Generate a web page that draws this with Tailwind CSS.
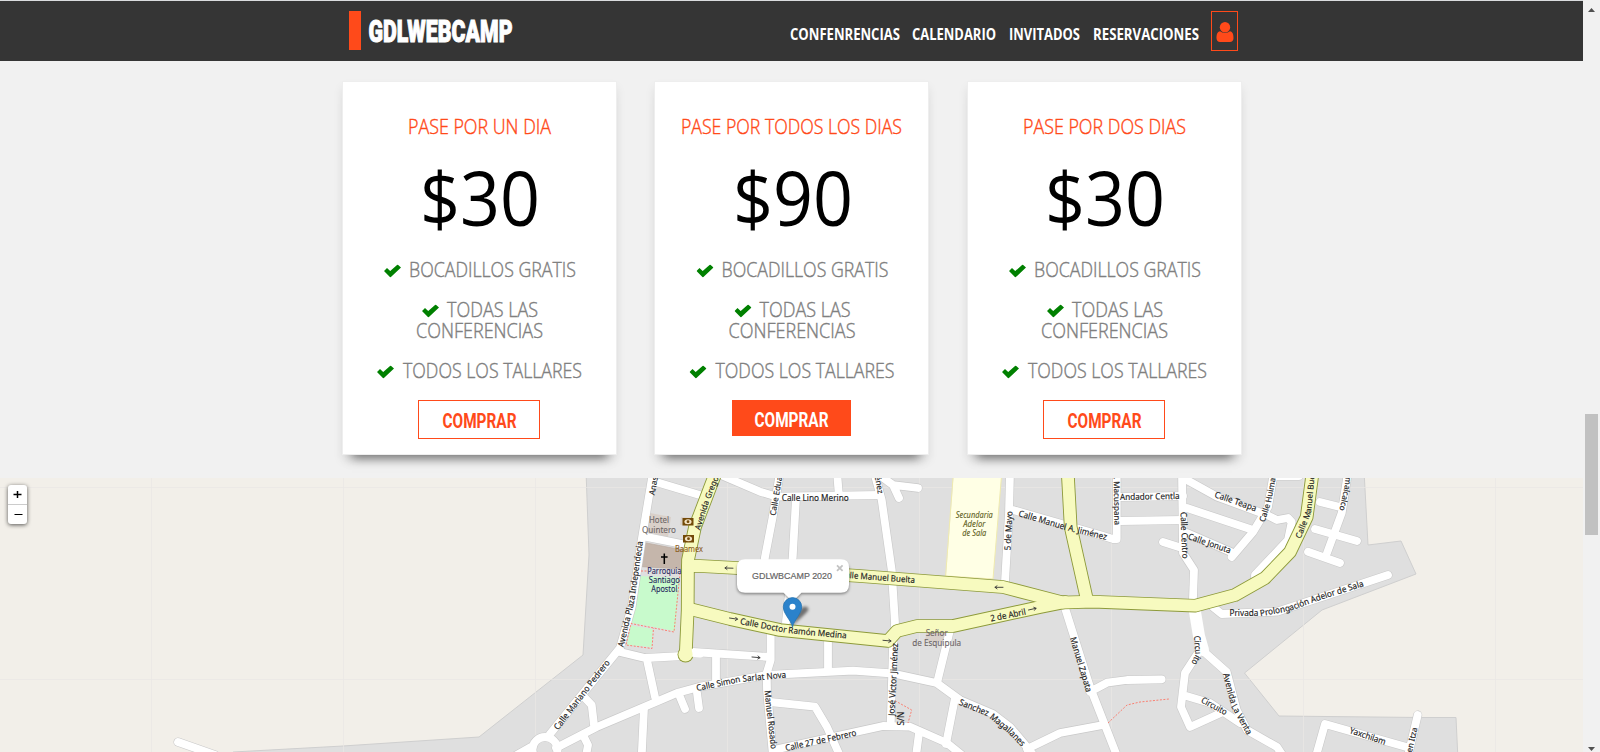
<!DOCTYPE html>
<html lang="es">
<head>
<meta charset="utf-8">
<title>GDLWEBCAMP</title>
<script src="https://cdn.jsdelivr.net/npm/@tailwindcss/browser@4"></script>
</head>
<body class="h-[752px] overflow-hidden bg-[#f1f1f1] font-['Open_Sans','Noto_Sans',sans-serif]">
<svg width="0" height="0" class="absolute">
  <symbol id="check" viewBox="0 0 17 13"><path fill="#008000" stroke="none" d="M0 6.6 3 3.4 6.2 6.6 13.6 0 17 3 6.400 13Z"/></symbol>
</svg>
<div class="flex h-full">
  <div class="flex w-[1583px] flex-col">
    <header class="h-[61px] border-t border-[#dadcde] bg-[#353535]">
      <div class="ml-[349px] flex h-full w-[889px] items-start justify-between pt-2.5">
        <div class="flex">
          <div class="h-[39px] w-3 bg-[#ff4a1a]"></div>
          <svg class="h-[39px] w-[160px] overflow-visible"><text x="7.5" y="31" textLength="144" lengthAdjust="spacingAndGlyphs" stroke-width="1.1" class="fill-white stroke-white font-['Roboto'] text-[31.5px] font-black">GDLWEBCAMP</text></svg>
        </div>
        <nav class="flex h-10 fill-white text-[15.5px] font-bold">
          <svg class="h-10 w-[122px] overflow-visible"><text y="29" textLength="110" lengthAdjust="spacingAndGlyphs">CONFENRENCIAS</text></svg>
          <svg class="h-10 w-[97px] overflow-visible"><text y="29" textLength="84" lengthAdjust="spacingAndGlyphs">CALENDARIO</text></svg>
          <svg class="h-10 w-[84px] overflow-visible"><text y="29" textLength="71" lengthAdjust="spacingAndGlyphs">INVITADOS</text></svg>
          <svg class="h-10 w-[118px] overflow-visible"><text y="29" textLength="106" lengthAdjust="spacingAndGlyphs">RESERVACIONES</text></svg>
          <div class="flex h-10 w-[27px] justify-center border border-[#ff4a1a] pt-2.5">
            <svg class="h-5 w-[18px]" viewBox="0 0 18 20"><circle cx="9" cy="5.2" r="5.2" fill="#ff4a1a"/><path fill="#ff4a1a" d="M4.1 9.2Q6 11 9 11t4.900-1.800C16.800 9.700 17.500 12.500 17.500 16.200 17.500 18.600 16 20 14 20H4C2 20 .5 18.600.5 16.200.5 12.500 1.200 9.700 4.100 9.200Z"/></svg>
          </div>
        </nav>
      </div>
    </header>

    <main class="ml-[343px] flex h-[417px] gap-[39px] pt-[21px]">
      <section class="flex h-[372px] w-[273px] flex-col items-center bg-white shadow-[0_0_0_1px_#eeeeee,0_13px_10px_-9px_rgba(0,0,0,.5),0_6px_10px_rgba(0,0,0,.1)]">
        <svg class="mt-8 h-6 w-full overflow-visible"><text x="65" y="19.5" textLength="143" lengthAdjust="spacingAndGlyphs" stroke-width=".4" class="fill-[#ff4a1a] stroke-[#ff4a1a] text-[19.5px] font-light">PASE POR UN DIA</text></svg>
        <svg class="mt-6 h-[72px] w-full overflow-visible"><text x="77" y="63.5" textLength="120" lengthAdjust="spacingAndGlyphs" class="text-[75px]">$30</text></svg>
        <svg class="mt-4 h-[148px] w-full fill-[#808080] stroke-[#808080] text-[19.5px] font-light" stroke-width=".4">
          <use href="#check" x="41" y="14.5" width="17" height="13"/><text x="66" y="27" textLength="167" lengthAdjust="spacingAndGlyphs">BOCADILLOS GRATIS</text>
          <use href="#check" x="79" y="54.5" width="17" height="13"/><text x="104" y="67" textLength="91" lengthAdjust="spacingAndGlyphs">TODAS LAS</text>
          <text x="73" y="88" textLength="127" lengthAdjust="spacingAndGlyphs">CONFERENCIAS</text>
          <use href="#check" x="34" y="115.5" width="17" height="13"/><text x="60" y="128" textLength="179" lengthAdjust="spacingAndGlyphs">TODOS LOS TALLARES</text>
        </svg>
        <div class="mt-0.5 mr-px flex h-[39px] w-[122px] border border-[#ff4a1a]">
          <svg class="h-full w-full overflow-visible"><text x="23.5" y="26.5" textLength="74" lengthAdjust="spacingAndGlyphs" class="fill-[#ff4a1a] font-['Roboto'] text-[21px] font-bold">COMPRAR</text></svg>
        </div>
      </section>
      <section class="flex h-[372px] w-[273px] flex-col items-center bg-white shadow-[0_0_0_1px_#eeeeee,0_13px_10px_-9px_rgba(0,0,0,.5),0_6px_10px_rgba(0,0,0,.1)]">
        <svg class="mt-8 h-6 w-full overflow-visible"><text x="26" y="19.5" textLength="221" lengthAdjust="spacingAndGlyphs" stroke-width=".4" class="fill-[#ff4a1a] stroke-[#ff4a1a] text-[19.5px] font-light">PASE POR TODOS LOS DIAS</text></svg>
        <svg class="mt-6 h-[72px] w-full overflow-visible"><text x="78" y="63.5" textLength="120" lengthAdjust="spacingAndGlyphs" class="text-[75px]">$90</text></svg>
        <svg class="mt-4 h-[148px] w-full fill-[#808080] stroke-[#808080] text-[19.5px] font-light" stroke-width=".4">
          <use href="#check" x="41.5" y="14.5" width="17" height="13"/><text x="66.5" y="27" textLength="167" lengthAdjust="spacingAndGlyphs">BOCADILLOS GRATIS</text>
          <use href="#check" x="79.5" y="54.5" width="17" height="13"/><text x="104.5" y="67" textLength="91" lengthAdjust="spacingAndGlyphs">TODAS LAS</text>
          <text x="73.5" y="88" textLength="127" lengthAdjust="spacingAndGlyphs">CONFERENCIAS</text>
          <use href="#check" x="34.5" y="115.5" width="17" height="13"/><text x="60.5" y="128" textLength="179" lengthAdjust="spacingAndGlyphs">TODOS LOS TALLARES</text>
        </svg>
        <div class="mt-0.5 flex h-9 w-[119px] bg-[#ff4a1a]">
          <svg class="h-full w-full overflow-visible"><text x="22.5" y="26.5" textLength="74" lengthAdjust="spacingAndGlyphs" class="fill-white font-['Roboto'] text-[21px] font-bold">COMPRAR</text></svg>
        </div>
      </section>
      <section class="ml-px flex h-[372px] w-[273px] flex-col items-center bg-white shadow-[0_0_0_1px_#eeeeee,0_13px_10px_-9px_rgba(0,0,0,.5),0_6px_10px_rgba(0,0,0,.1)]">
        <svg class="mt-8 h-6 w-full overflow-visible"><text x="55" y="19.5" textLength="163" lengthAdjust="spacingAndGlyphs" stroke-width=".4" class="fill-[#ff4a1a] stroke-[#ff4a1a] text-[19.5px] font-light">PASE POR DOS DIAS</text></svg>
        <svg class="mt-6 h-[72px] w-full overflow-visible"><text x="77" y="63.5" textLength="120" lengthAdjust="spacingAndGlyphs" class="text-[75px]">$30</text></svg>
        <svg class="mt-4 h-[148px] w-full fill-[#808080] stroke-[#808080] text-[19.5px] font-light" stroke-width=".4">
          <use href="#check" x="41" y="14.5" width="17" height="13"/><text x="66" y="27" textLength="167" lengthAdjust="spacingAndGlyphs">BOCADILLOS GRATIS</text>
          <use href="#check" x="79" y="54.5" width="17" height="13"/><text x="104" y="67" textLength="91" lengthAdjust="spacingAndGlyphs">TODAS LAS</text>
          <text x="73" y="88" textLength="127" lengthAdjust="spacingAndGlyphs">CONFERENCIAS</text>
          <use href="#check" x="34" y="115.5" width="17" height="13"/><text x="60" y="128" textLength="179" lengthAdjust="spacingAndGlyphs">TODOS LOS TALLARES</text>
        </svg>
        <div class="mt-0.5 mr-px flex h-[39px] w-[122px] border border-[#ff4a1a]">
          <svg class="h-full w-full overflow-visible"><text x="23.5" y="26.5" textLength="74" lengthAdjust="spacingAndGlyphs" class="fill-[#ff4a1a] font-['Roboto'] text-[21px] font-bold">COMPRAR</text></svg>
        </div>
      </section>
    </main>

    <div class="relative h-[274px] w-full overflow-hidden bg-[#f2efe9]">
      <svg class="block h-[274px] w-[1583px]" viewBox="0 478 1583 274" fill="none" stroke-linejoin="round" stroke-linecap="round">
        <defs>
          <filter id="soft" x="-50%" y="-50%" width="200%" height="200%"><feGaussianBlur stdDeviation="1.8"/></filter>
          <g id="roads">
            <path d="M178 742 215 755"/>
            <path d="M653 472 641.7 540 631.7 607 620 648 581.7 695 550 734"/>
            <path d="M531 747 515 756M556 748 596.7 727 656.7 701.7 677 693 700 686.7 767 675 853 670.7 893 673.5 936.7 683 960 700 993 714 1010 727 1027 747 1034 756"/>
            <path d="M655 481.7 703 496M721 475 760 491.7 777 496.7 880 495"/>
            <path d="M780 472 772.7 517 765 557 764 566M796 498 792.7 557 786 622"/>
            <path d="M770.7 630V660L766.7 673 767 690 773 756M837 472 838.7 493"/>
            <path d="M874 472 881.7 500 891.7 570 895 623 893 647 890.7 724"/>
            <path d="M878 474 893 485 918 488M893 485 899 498"/>
            <path d="M1010 472 1009 513 1005 582M1013 510 1100 535 1113 539H1116.7V472"/>
            <path d="M1120 497 1183 496M1120 521 1183 520"/>
            <path d="M1182 472 1183 553 1194 570 1192.7 607 1198 633 1202 650 1226.7 672 1236.7 710 1247 730 1277 747 1283 756"/>
            <path d="M1200 650 1185 673 1181 707 1190 727 1223 712M1183 695 1210 703 1240 723"/>
            <path d="M1163 542 1182 548M1187 533 1231 552M1187 508 1253 530"/>
            <path d="M1187 480 1217 496.7 1267 515 1277 520 1288 518 1291.7 522 1288 540 1255 575V580"/>
            <path d="M1274 472 1268 507 1253 532 1231.7 557M1277 476H1299"/>
            <path d="M1348 472 1341.7 513 1327 553M1320 502 1340 507M1315 529 1357 541M1308 551.7 1340 563"/>
            <path d="M1213 607 1221.7 614 1277 611.7 1337 592 1388 575"/>
            <path d="M1090 691.7 1107 682.7 1127 680 1161.7 679.3M1065 608 1090 687 1117 756"/>
            <path d="M1027 749 1060 733 1103 725M950 630 937 683M955 698 946 744"/>
            <path d="M778 749 883 726 910 726.7 947 743 963 756M919 733 916 756"/>
            <path d="M770 702 815 706.7 827 727 840 756M828 640V671M716 657V680"/>
            <path d="M620 652 645 658 683 656 693 652 770 657M647 660 655 697M645 536.7 687 545"/>
            <path d="M680 697 685 709M697 693 699 708M644 708 641.7 756M585 698 591.7 705 594 725M584 737 588 745 586 756"/>
            <path d="M1316 756 1325 724 1410 748M1417.7 715 1408 756"/>
          </g>
          <g id="avenues">
            <path d="M716 472 695 527 688 560 687.7 610 685.7 655"/>
            <path d="M688 566H700L737 568 860 576 1003 587 1063 602.5 1093 601.7 1195 605.7 1235 595 1265 578 1290 552 1306.7 517 1312.7 472"/>
            <path d="M690 609 730 619 780 630 888 641 897 631 917 626H953L1040 607 1065 602"/>
            <path d="M1067.7 472 1070.7 527 1087 600"/>
          </g>
        </defs>
        <path fill="#dfdfdf" stroke="#cfcfcf" stroke-width="1" d="M586 470 589 555 583 655 479 737 343 746 233 752V760H1458L1456 717.5H1420L1279 716 1244.5 673 1322 610 1416 574 1401 541 1368 545 1364 470Z"/>
        <path stroke="#e9e7e4" stroke-opacity=".7" d="M151.5 478V752M343.5 478V752M535.5 478V752M727.5 478V752M919.5 478V752M1111.5 478V752M1303.5 478V752M1495.5 478V752M0 487.5H1583M0 679.5H1583"/>
        <path fill="#ffffe5" stroke="#f0ebae" d="M954 470 1002 470 993 579 946 576Z"/>
        <path fill="#d9d0c9" d="M650 513 671 517 668 537 647.5 532ZM681 517 693 518 692 526 680 525ZM927 630 947 632 945 642 925 641Z"/>
        <path fill="#c5b6ab" stroke="#b5a59a" stroke-width=".6" d="M645 542.7 683 550 682 569 641.7 566.7Z"/>
        <path fill="#c8facc" d="M640 576 680 578 675 631 631.7 623Z"/>
        <use href="#roads" stroke="#c9c9c9" stroke-width="9"/>
        <circle cx="545" cy="749.5" r="12.5" stroke="#c9c9c9" stroke-width="9"/>
        <path d="M1195 612 1199 636 1203 650" stroke="#fff" stroke-width="12"/>
        <use href="#roads" stroke="#fff" stroke-width="7.8"/>
        <circle cx="545" cy="749.5" r="12.5" stroke="#fff" stroke-width="7.8"/>
        <path fill="#c8facc" d="M630.7 625.5 652.7 629 651.7 647 627 645Z"/>
        <use href="#avenues" stroke="#8d9a3a" stroke-width="13.6"/>
        <circle cx="685.5" cy="654.5" r="8" fill="#8d9a3a"/>
        <path d="M690 652.500 700 653.500" stroke="#fff" stroke-width="7.800"/>
        <use href="#avenues" stroke="#f7fabf" stroke-width="11.8"/>
        <circle cx="685.5" cy="654.5" r="7.1" fill="#f7fabf"/>
        <path d="M641 571H648M680 573 674 632 631 623.5 626 645 652 648.5 653.5 628M895 700.7 911.7 710 908 723M1108 723 1127 705 1140 702 1169 699" stroke="#fa8072" stroke-width="1" stroke-dasharray="2 1.5" stroke-linecap="butt"/>
        <path d="M664.3 553.5V564M661 557H667.6" stroke="#000" stroke-width="1.5" stroke-linecap="butt"/>
        <g fill="#734a08"><rect x="682.5" y="518" width="11" height="7.5"/><rect x="683" y="535" width="11" height="7.5"/></g>
        <g fill="#f3e3c4"><ellipse cx="688" cy="521.7" rx="3.6" ry="2.5"/><ellipse cx="688.5" cy="538.7" rx="3.6" ry="2.5"/></g>
        <g fill="#734a08"><circle cx="688" cy="521.7" r="1.4"/><circle cx="688.5" cy="538.7" r="1.4"/></g>
        <g stroke="#333" stroke-width=".9">
          <path d="M733 568.2 725 568M727 566.5 725 568 727 569.5M729.5 618 737.5 619.2M735.7 617.3 737.5 619.2 735.3 620.5M752 657 760 657.7M758 656 760 657.7 757.8 659M883 640.3 891 641M889 639.5 891 641 888.7 642.5M1003 587.3H995M997 585.8 995 587.3 997 588.8M1028.5 610 1036 608.3M1033.8 607.3 1036 608.3 1034.5 610.3"/>
        </g>
        <g id="labels" class="font-['Noto_Sans'] text-[8.7px]" fill="#222"></g>
      </svg>

      <div class="absolute left-2 top-[7px] flex w-[19px] flex-col overflow-hidden rounded-[3px] bg-white shadow-[0_1px_4px_rgba(0,0,0,.65)]">
        <div class="flex h-5 items-center justify-center border-b border-[#ccc]"><svg class="h-[9px] w-[9px]" viewBox="0 0 9 9"><path stroke="#000" stroke-width="1.5" d="M.5 4.500H8.500M4.500 1V8"/></svg></div>
        <div class="flex h-[19px] items-center justify-center"><svg class="ml-px h-[9px] w-[9px]" viewBox="0 0 9 9"><path stroke="#000" stroke-width="1.2" d="M.5 4.500H8.500"/></svg></div>
      </div>

      <svg class="absolute left-[720px] top-[66px] h-[100px] w-[150px]" viewBox="720 544 150 100">
        <path d="M792 626 798 612Q803 605 807 607T804 615Z" fill="#000" fill-opacity=".5" filter="url(#soft)"/>
        <path d="M745 562H841Q849 562 849 570V586Q849 594 841 594H801L792.5 603 784 594H745Q737 594 737 586V570Q737 562 745 562Z" fill="#000" fill-opacity=".45" filter="url(#soft)"/>
        <path d="M745 559.3H841Q849 559.3 849 567.3V584.7Q849 592.7 841 592.7H801.5L792.5 601.5 783.5 592.7H745Q737 592.7 737 584.7V567.3Q737 559.3 745 559.3Z" fill="#fff"/>
        <path d="M792.5 627C791 620 783.3 614 783.3 606.8A9.200 9.200 0 0 1 801.7 606.8C801.7 614 794 620 792.5 627Z" fill="#2b82cb" stroke="#2572ae" stroke-width=".8"/>
        <circle cx="792.5" cy="606.8" r="3" fill="#fff"/>
        <text x="752" y="579.3" textLength="80" lengthAdjust="spacingAndGlyphs" stroke-width=".2" class="fill-[#666] stroke-[#666] font-['Liberation_Sans'] text-[9.5px]">GDLWBCAMP 2020</text>
        <path d="M837 565.3 842.6 570.9M842.6 565.3 837 570.9" stroke="#c3c3c3" stroke-width="1.8"/>
      </svg>
    </div>
  </div>

  <aside class="flex w-[17px] flex-col items-center bg-[#f1f1f1] pt-2">
    <svg class="h-1 w-[7px]" viewBox="0 0 7 4"><path fill="#505050" d="M0 4 3.500 0 7 4Z"/></svg>
    <div class="mt-[402px] h-[121px] w-[13px] bg-[#c1c1c1]"></div>
    <svg class="mt-[212px] h-1 w-[7px]" viewBox="0 0 7 4"><path fill="#505050" d="M0 0H7L3.500 4Z"/></svg>
  </aside>
</div>
<script>
  const NS = 'http://www.w3.org/2000/svg';
  const layer = document.getElementById('labels');
  // [name, baseline, mode]: "fit" spans the line, "start" / "end" keep the natural length
  const streets = [
    ['Anaselmo', 'M654.5 495.500 662 455', 'start'],
    ['Avenida Plaza Independecia', 'M623.500 647.500 634 603 643 541.500', 'fit'],
    ['Calle Mariano Pedrero', 'M558 730.500 610.500 662.500', 'fit'],
    ['Avenida Gregorio', 'M700 530.500 708.500 503 728 455', 'start'],
    ['Calle Eduardo', 'M775.500 516 786 455', 'start'],
    ['Jiménez', 'M871 455 878 494', 'end'],
    ['Calle Lino Merino', 'M781.700 500.500H849', 'fit'],
    ['Calle Manuel Buelta', 'M840 577.500 915 583', 'fit'],
    ['Calle Doctor Ramón Medina', 'M739.700 624 787 633 846.700 638.500', 'fit'],
    ['Calle Simon Sarlat Nova', 'M697 691 740 682 786.700 677.500', 'fit'],
    ['Manuel Rosado', 'M764.500 690.700 771 749.500', 'fit'],
    ['Calle 27 de Febrero', 'M786 751 857 735.500', 'fit'],
    ['José Víctor Jiménez', 'M894.500 716 898 643', 'fit'],
    ['2 de Abril', 'M991 621.500 1026.500 614.500', 'fit'],
    ['5 de Mayo', 'M1010.500 550.500 1012.500 511', 'fit'],
    ['Calle Manuel A. Jiménez', 'M1018 516 1062 529 1106.500 540', 'fit'],
    ['C. Macuspana', 'M1113.500 465 1114.500 525', 'end'],
    ['Andador Centla', 'M1120 500 1180 499', 'fit'],
    ['Calle Centro', 'M1180.500 512 1182.500 559', 'fit'],
    ['Calle Teapa', 'M1214 497 1255.500 511.500', 'fit'],
    ['Calle Huimanguillo', 'M1264.500 522.500 1271 503 1281 450', 'start'],
    ['Calle Manuel Buelta', 'M1300.500 539 1311 513 1317 450', 'start'],
    ['Comalcalco', 'M1347 455 1345 485 1339.500 510', 'end'],
    ['Calle Jonuta', 'M1187.500 539 1230 553.500', 'fit'],
    ['Privada Prolongación Adelor de Sala', 'M1229.500 616 1262 616 1290 611 1320 600 1364.500 586', 'fit'],
    ['Circuito', 'M1194 636 1195.500 655 1191 663', 'fit'],
    ['Circuito', 'M1200.500 702 1225.500 715.500', 'fit'],
    ['Avenida La Venta', 'M1223 674 1232 708 1247.500 735.500', 'fit'],
    ['Yaxchilam', 'M1349 733 1385 745', 'fit'],
    ['Chichen Itza', 'M1406.500 775 1417.500 728', 'end'],
    ['Manuel Zapata', 'M1070 638 1086.500 693', 'fit'],
    ['Sanchez Magallanes', 'M958.500 704.500 987 716 1007 732 1022 747', 'fit'],
    ['S/N', 'M904.500 725.500V711.500', 'fit'],
  ];
  streets.forEach(([name, d, mode], i) => {
    const p = document.createElementNS(NS, 'path');
    p.setAttribute('id', 'st' + i);
    p.setAttribute('d', d);
    p.setAttribute('fill', 'none');
    layer.appendChild(p);
    const t = document.createElementNS(NS, 'text');
    t.setAttribute('stroke', '#222');
    t.setAttribute('stroke-width', '.15');
    const tp = document.createElementNS(NS, 'textPath');
    tp.setAttribute('href', '#st' + i);
    tp.textContent = name;
    if (mode === 'fit') {
      tp.setAttribute('textLength', (p.getTotalLength() - 0.3).toFixed(1));
      tp.setAttribute('lengthAdjust', 'spacingAndGlyphs');
    } else {
      t.setAttribute('font-size', '8.1');
    }
    if (mode === 'end') { tp.setAttribute('startOffset', '100%'); t.setAttribute('text-anchor', 'end'); }
    t.appendChild(tp);
    layer.appendChild(t);
  });
  // [text, centre x, baseline y, width, colour, italic]
  const places = [
    ['Hotel', 659, 523, 20, '#6d6666'], ['Quintero', 659, 533, 34, '#6d6666'],
    ['Baamex', 689, 551.5, 28, '#8a5a1c'],
    ['Parroquia', 664.3, 574, 34, '#26265c'], ['Santiago', 664.3, 583, 31, '#26265c'], ['Apostol', 664.3, 592, 26, '#26265c'],
    ['Secundaria', 974.3, 518, 37, '#5d5d20', 1], ['Adelor', 974.3, 527, 22, '#5d5d20', 1], ['de Sala', 974.3, 536, 24, '#5d5d20', 1],
    ['Señor', 936.7, 636, 22, '#6d6666'], ['de Esquipula', 936.7, 646, 49, '#6d6666'],
  ];
  places.forEach(([s, x, y, w, c, it]) => {
    const t = document.createElementNS(NS, 'text');
    t.setAttribute('x', x - w / 2);
    t.setAttribute('y', y);
    t.setAttribute('textLength', w);
    t.setAttribute('lengthAdjust', 'spacingAndGlyphs');
    t.setAttribute('fill', c);
    t.setAttribute('stroke', c);
    t.setAttribute('stroke-width', '.1');
    if (it) t.setAttribute('font-style', 'italic');
    t.textContent = s;
    layer.appendChild(t);
  });
</script>
</body>
</html>
